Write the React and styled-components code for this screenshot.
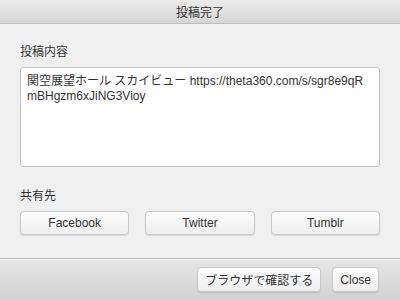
import React from "react";
import styled, { createGlobalStyle } from "styled-components";

const GlobalStyle = createGlobalStyle`
  html, body {
    margin: 0;
    padding: 0;
    background: #f0f0f0;
  }
  body {
    font-family: "Liberation Sans", Arial, "Noto Sans CJK JP", sans-serif;
    font-size: 12px;
    color: #333;
  }
`;

const Window = styled.div`
  width: 400px;
  height: 300px;
  display: flex;
  flex-direction: column;
  background: #f0f0f0;
  overflow: hidden;
`;

const TitleBar = styled.div`
  height: 23px;
  flex: none;
  display: flex;
  align-items: center;
  justify-content: center;
  background: linear-gradient(#ebebeb, #d6d6d6);
  border-bottom: 1px solid #bdbdbd;
  color: #333;
`;

const Body = styled.div`
  flex: 1;
  padding: 21px 20px 0 20px;
  display: flex;
  flex-direction: column;
`;

const Label = styled.div`
  line-height: 14px;
  margin-bottom: 8px;
`;

const TextBox = styled.div`
  box-sizing: border-box;
  height: 100px;
  background: #fff;
  border: 1px solid #c4c4c4;
  border-radius: 3px;
  padding: 6px 6px;
  line-height: 15px;
  word-break: break-all;
  color: #333;
  margin-bottom: 22px;
`;

const ShareRow = styled.div`
  display: grid;
  grid-template-columns: repeat(3, 1fr);
  column-gap: 16px;
`;

const Button = styled.button`
  box-sizing: border-box;
  height: ${(p) => p.$h || 24}px;
  padding: 0 ${(p) => p.$px || 0}px;
  font-family: inherit;
  font-size: 12px;
  color: #333;
  background: linear-gradient(#fdfdfd, #efefef);
  border: 1px solid #c9c9c9;
  border-radius: 4px;
  box-shadow: 0 1px 1px rgba(0, 0, 0, 0.12);
`;

const Footer = styled.div`
  height: 41px;
  flex: none;
  border-top: 1px solid #b8b8b8;
  box-shadow: inset 0 1px 0 #fafafa;
  background: linear-gradient(#e6e6e6, #d2d2d2);
  display: flex;
  align-items: center;
  justify-content: flex-end;
  gap: 11px;
  padding: 0 21px 0 0;
`;

export default function App() {
  return (
    <>
      <GlobalStyle />
      <Window>
        <TitleBar>投稿完了</TitleBar>
        <Body>
          <Label>投稿内容</Label>
          <TextBox>
            関空展望ホール スカイビュー https://theta360.com/s/sgr8e9qRmBHgzm6xJiNG3Vioy
          </TextBox>
          <Label>共有先</Label>
          <ShareRow>
            <Button>Facebook</Button>
            <Button>Twitter</Button>
            <Button>Tumblr</Button>
          </ShareRow>
        </Body>
        <Footer>
          <Button $h={25} $px={7}>ブラウザで確認する</Button>
          <Button $h={25} $px={7}>Close</Button>
        </Footer>
      </Window>
    </>
  );
}
